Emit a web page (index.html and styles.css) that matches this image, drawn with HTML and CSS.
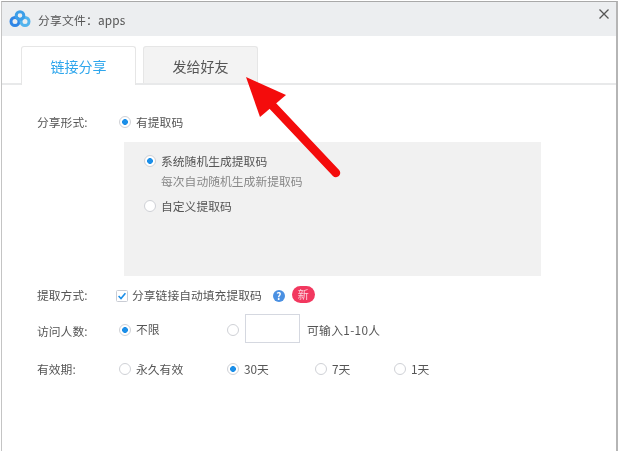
FILE: index.html
```html
<!DOCTYPE html>
<html lang="zh-CN">
<head>
  <meta charset="UTF-8" />
  <title>分享文件</title>
  <link rel="stylesheet" href="styles.css">
</head>
<body>
  <div class="dialog">
    <div class="titlebar">
      <svg class="logo" width="22" height="18" viewBox="0 0 22 18" fill="none">
        <circle cx="6" cy="11.5" r="4" stroke="#2f86e6" stroke-width="3"/>
        <circle cx="16" cy="11.5" r="4" stroke="#53b4ee" stroke-width="3"/>
        <circle cx="11" cy="5.5" r="3.8" stroke="#3d9fe8" stroke-width="3"/>
      </svg>
      <span class="title">分享文件：apps</span>
      <svg class="close" width="10" height="10" viewBox="0 0 10 10">
        <path d="M0.5 0.5L9.5 9.5M9.5 0.5L0.5 9.5" stroke="#555" stroke-width="1.3" fill="none"/>
      </svg>
    </div>

    <div class="tabs">
      <div class="tab active">链接分享</div>
      <div class="tab">发给好友</div>
    </div>

    <div class="form">
      <div class="row">
        <span class="label">分享形式:</span>
        <span class="opt"><i class="radio on"></i>有提取码</span>
      </div>

      <div class="panel">
        <div class="row"><span class="opt"><i class="radio on"></i>系统随机生成提取码</span></div>
        <div class="row hint">每次自动随机生成新提取码</div>
        <div class="row custom"><span class="opt"><i class="radio"></i>自定义提取码</span></div>
      </div>

      <div class="row fetch">
        <span class="label">提取方式:</span>
        <span class="check">
          <svg width="12" height="12" viewBox="0 0 12 12">
            <rect x="0.5" y="0.5" width="11" height="11" rx="1" fill="#fff" stroke="#c9ccd4"/>
            <path d="M2.6 6L5 8.6L9.4 3.2" stroke="#1c8fe8" stroke-width="1.6" fill="none"/>
          </svg>
        </span>
        <span>分享链接自动填充提取码</span>
        <span class="help">?</span>
        <span class="badge">新</span>
      </div>

      <div class="row visitors">
        <span class="label">访问人数:</span>
        <span class="opt w108"><i class="radio on"></i>不限</span>
        <i class="radio"></i>
        <span class="box"></span>
        <span class="limit">可输入1-10人</span>
      </div>

      <div class="row expiry">
        <span class="label">有效期:</span>
        <span class="opt w108"><i class="radio"></i>永久有效</span>
        <span class="opt w88"><i class="radio on"></i>30天</span>
        <span class="opt w79"><i class="radio"></i>7天</span>
        <span class="opt"><i class="radio"></i>1天</span>
      </div>
    </div>

    <svg class="arrow" width="110" height="110" viewBox="0 0 110 110">
      <path d="M24 26L90 96" stroke="#f40c0c" stroke-width="8.5" stroke-linecap="round" fill="none"/>
      <path d="M0 0L40 18L14 40Z" fill="#f40c0c"/>
    </svg>
  </div>
</body>
</html>
```

FILE: styles.css
```css
html, body {
  margin: 0;
  height: 100%;
  background: #fff;
  overflow: hidden;
}
body {
  font-family: "Noto Sans CJK SC", "Liberation Sans", sans-serif;
  font-size: 11.8px;
  color: #555;
}
.dialog {
  position: relative;
  height: 450px;
  margin: 1px 1px 0 1px;
  background: #fff;
  border-top: 1px solid #a9a9a9;
  border-left: 1px solid #c4c4c4;
  border-right: 2px solid #b5b5b5;
  filter: blur(0.45px);
}
.titlebar {
  display: flex;
  align-items: center;
  height: 34px;
  background: #eceef0;
  padding-left: 7px;
}
.logo {
  flex: none;
}
.title {
  margin-left: 7px;
  letter-spacing: 0.2px;
  color: #555;
}
.close {
  margin-left: auto;
  margin-right: 7px;
  margin-top: -11px;
}
.tabs {
  display: flex;
  gap: 7px;
  height: 37px;
  margin-top: 10px;
  padding-left: 19px;
  border-bottom: 2px solid #e8e9ea;
}
.tab {
  width: 113px;
  height: 36px;
  border: 1px solid #e6e6e6;
  border-bottom: none;
  border-radius: 3px 3px 0 0;
  background: #f3f3f3;
  font-size: 14px;
  line-height: 38px;
  text-align: center;
  color: #555;
}
.tab.active {
  height: 38px;
  background: #fff;
  color: #2ea6ec;
}
.form {
  padding: 26px 0 0 35px;
}
.row {
  display: flex;
  align-items: center;
  height: 20px;
}
.label {
  width: 82px;
  flex: none;
}
.opt {
  display: flex;
  align-items: center;
  flex: none;
}
.w108 { width: 108px; }
.w88 { width: 88px; }
.w79 { width: 79px; }
.radio {
  display: block;
  flex: none;
  box-sizing: border-box;
  width: 12px;
  height: 12px;
  margin: 2px 5px 0 0;
  border: 1px solid #cfd1d6;
  border-radius: 50%;
  background: #fff;
}
.radio.on {
  background: radial-gradient(circle, #1c8fe8 0, #1c8fe8 2.6px, #fff 3.2px);
}
.panel {
  box-sizing: border-box;
  width: 417px;
  height: 134px;
  margin: 11px 0 0 87px;
  padding: 8px 0 0 20px;
  background: #f1f1f1;
}
.hint {
  padding-left: 17px;
  color: #888;
}
.custom {
  margin-top: 5px;
}
.fetch {
  margin-top: 8px;
}
.fetch .label {
  width: 79px;
}
.check {
  display: flex;
  margin: 4px 4px 0 0;
}
.help {
  width: 12px;
  height: 12px;
  margin: 4px 0 0 11px;
  border-radius: 50%;
  background: #4a90e2;
  color: #fff;
  font-size: 10px;
  font-weight: bold;
  line-height: 12px;
  text-align: center;
}
.badge {
  width: 23px;
  height: 17px;
  margin: 1px 0 0 7px;
  border-radius: 9px;
  background: #f2385f;
  color: #fbd5dd;
  font-size: 11px;
  line-height: 17px;
  text-align: center;
}
.visitors {
  height: 29px;
  margin-top: 10px;
}
.visitors .label {
  margin-top: 3px;
}
.box {
  box-sizing: border-box;
  width: 55px;
  height: 29px;
  margin-left: 1px;
  margin-right: 7px;
  border: 1px solid #d5d8e0;
  background: #fff;
}
.limit {
  margin-top: 2px;
  letter-spacing: 0.3px;
}
.expiry {
  margin-top: 15px;
}
.arrow {
  position: absolute;
  left: 244px;
  top: 75px;
}
```
